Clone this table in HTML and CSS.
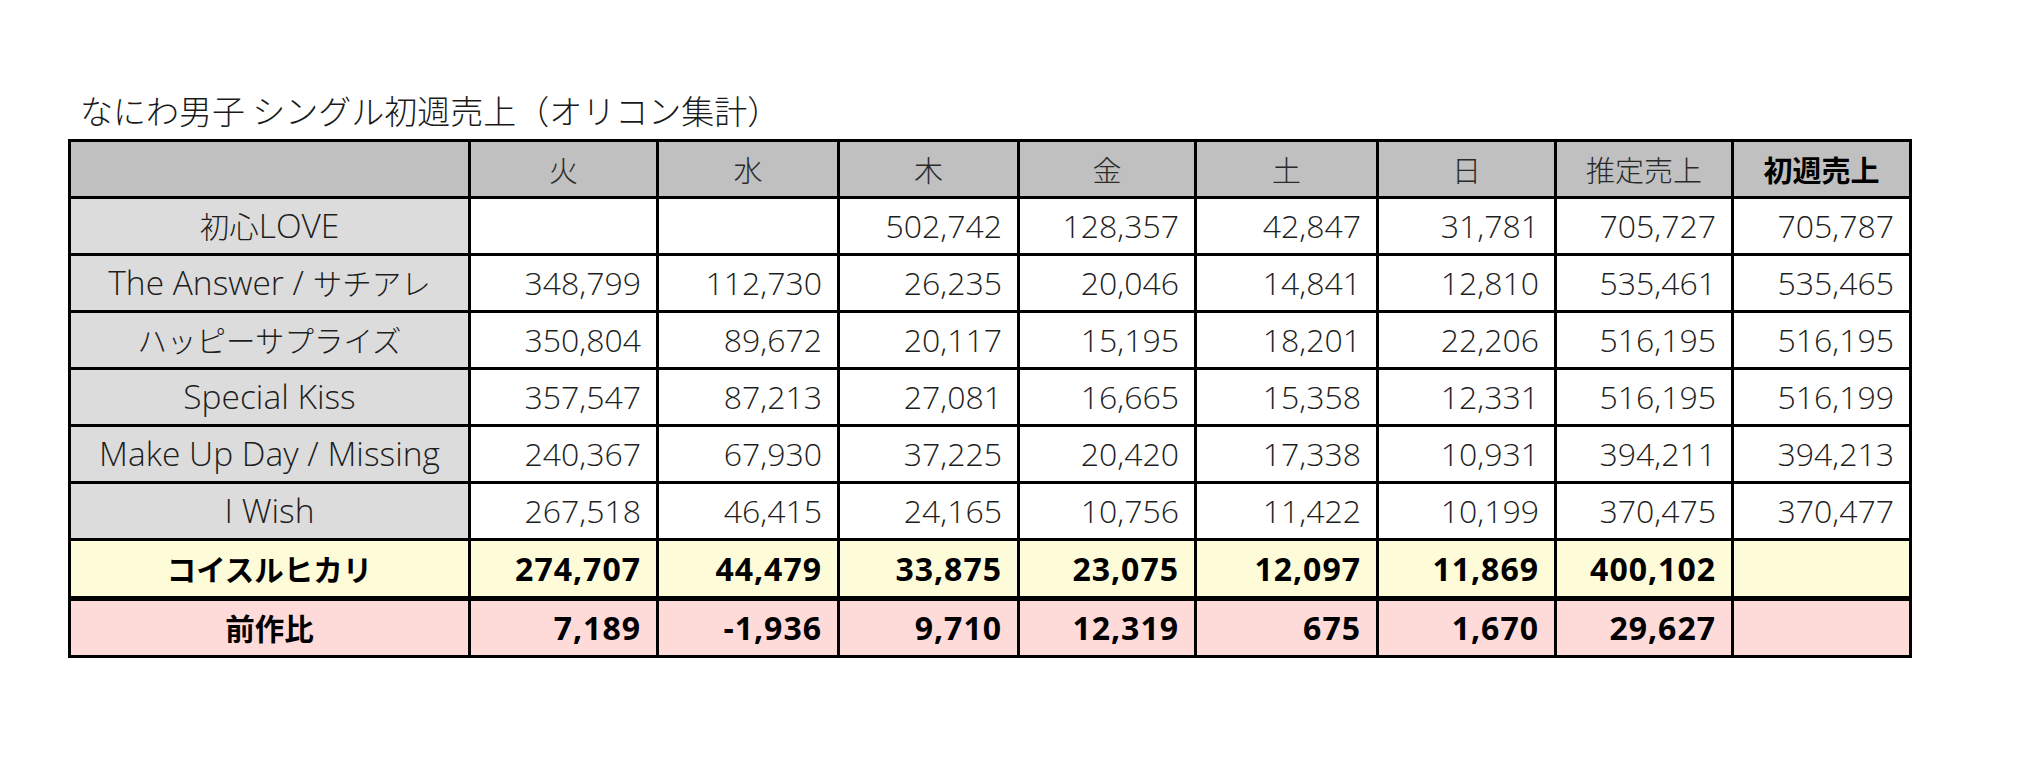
FILE: index.html
```html
<!DOCTYPE html>
<html lang="ja">
<head>
<meta charset="utf-8">
<title>なにわ男子 シングル初週売上</title>
<link rel="stylesheet" href="styles.css">
</head>
<body>
<div class="page">
  <h1 class="title">なにわ男子 シングル初週売上（オリコン集計）</h1>
  <table class="sales">
    <thead>
      <tr>
        <th class="c-name"></th>
        <th class="c-tue">火</th>
        <th class="c-wed">水</th>
        <th class="c-thu">木</th>
        <th class="c-fri">金</th>
        <th class="c-sat">土</th>
        <th class="c-sun">日</th>
        <th class="c-est">推定売上</th>
        <th class="c-first strong">初週売上</th>
      </tr>
    </thead>
    <tbody>
      <tr>
        <td class="name"><span class="ja">初心</span>LOVE</td>
        <td></td><td></td>
        <td>502,742</td><td>128,357</td><td>42,847</td><td>31,781</td><td>705,727</td><td>705,787</td>
      </tr>
      <tr>
        <td class="name">The Answer / <span class="ja">サチアレ</span></td>
        <td>348,799</td><td>112,730</td><td>26,235</td><td>20,046</td><td>14,841</td><td>12,810</td><td>535,461</td><td>535,465</td>
      </tr>
      <tr>
        <td class="name"><span class="ja">ハッピーサプライズ</span></td>
        <td>350,804</td><td>89,672</td><td>20,117</td><td>15,195</td><td>18,201</td><td>22,206</td><td>516,195</td><td>516,195</td>
      </tr>
      <tr>
        <td class="name">Special Kiss</td>
        <td>357,547</td><td>87,213</td><td>27,081</td><td>16,665</td><td>15,358</td><td>12,331</td><td>516,195</td><td>516,199</td>
      </tr>
      <tr>
        <td class="name">Make Up Day / Missing</td>
        <td>240,367</td><td>67,930</td><td>37,225</td><td>20,420</td><td>17,338</td><td>10,931</td><td>394,211</td><td>394,213</td>
      </tr>
      <tr>
        <td class="name">I Wish</td>
        <td>267,518</td><td>46,415</td><td>24,165</td><td>10,756</td><td>11,422</td><td>10,199</td><td>370,475</td><td>370,477</td>
      </tr>
      <tr class="row-new">
        <td class="name"><span class="ja">コイスルヒカリ</span></td>
        <td>274,707</td><td>44,479</td><td>33,875</td><td>23,075</td><td>12,097</td><td>11,869</td><td>400,102</td><td></td>
      </tr>
      <tr class="row-diff">
        <td class="name"><span class="ja">前作比</span></td>
        <td>7,189</td><td>-1,936</td><td>9,710</td><td>12,319</td><td>675</td><td>1,670</td><td>29,627</td><td></td>
      </tr>
    </tbody>
  </table>
</div>
</body>
</html>
```
FILE: styles.css
```css
html, body {
  margin: 0;
  padding: 0;
  background: #ffffff;
}

body {
  font-family: "Open Sans", "Noto Sans CJK JP", sans-serif;
  color: #1e1e1e;
}

.page {
  padding: 89px 0 0 68px;
}

.title {
  margin: 0 0 8px 12px;
  font-family: "Noto Sans CJK JP", sans-serif;
  font-size: 33px;
  font-weight: 300;
  line-height: 42px;
  color: #1a1a1a;
}

.sales {
  border-collapse: separate;
  border-spacing: 0;
  table-layout: fixed;
  width: 1844px;
  border-top: 3px solid #000;
  border-left: 3px solid #000;
}

.sales th,
.sales td {
  box-sizing: border-box;
  height: 57px;
  padding: 0 15px 0 0;
  border-right: 3px solid #000;
  border-bottom: 3px solid #000;
  font-size: 32px;
  font-weight: 300;
  line-height: 1;
  text-align: right;
  white-space: nowrap;
  overflow: hidden;
}

.sales th {
  background: #bfc0bf;
  text-align: center;
  padding: 0;
  font-family: "Noto Sans CJK JP", sans-serif;
  font-size: 29px;
  color: #2a2a2a;
}

.sales th.strong {
  font-weight: 700;
  color: #000;
}

.ja {
  font-family: "Noto Sans CJK JP", sans-serif;
  font-size: 29.5px;
}

.c-name { width: 400px; }
.c-tue { width: 188px; }
.c-wed { width: 181px; }
.c-thu { width: 180px; }
.c-fri { width: 177px; }
.c-sat { width: 182px; }
.c-sun { width: 178px; }
.c-est { width: 177px; }
.c-first { width: 178px; }

.sales td.name {
  background: #dcdcdc;
  text-align: center;
  padding: 0;
  font-size: 33.5px;
}

.row-new td,
.row-diff td {
  font-weight: 700;
  letter-spacing: 1px;
  color: #000;
}

.row-new td .ja,
.row-diff td .ja {
  letter-spacing: 0;
}

.row-new td,
.row-new td.name {
  background: #fefbd8;
}

.row-new td {
  height: 60px;
  border-bottom-width: 5px;
}

.row-diff td,
.row-diff td.name {
  background: #fedad9;
}
```
